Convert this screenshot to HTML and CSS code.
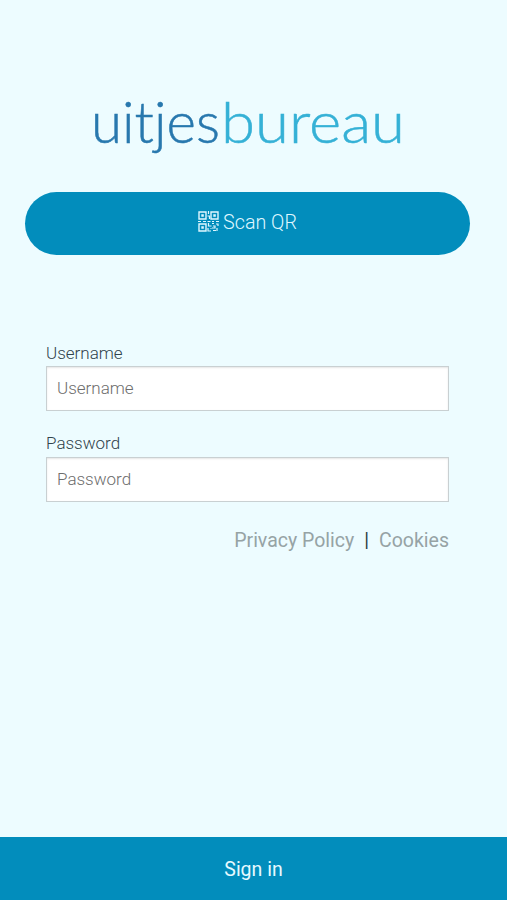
FILE: index.html
```html
<!DOCTYPE html>
<html lang="en">
<head>
<meta charset="utf-8">
<title>uitjesbureau</title>
<link rel="stylesheet" href="styles.css">
</head>
<body>
<main class="page">
  <svg class="logo" width="330" height="90" viewBox="84 76 330 90" role="img" aria-label="uitjesbureau">
    <text class="logo-text first" x="91" y="143" textLength="129" lengthAdjust="spacingAndGlyphs">uitjes</text>
    <text class="logo-text second" x="221" y="143" textLength="184" lengthAdjust="spacingAndGlyphs">bureau</text>
  </svg>
  <button class="scan" type="button">
    <svg class="qr" width="21" height="21" viewBox="0 0 21 21" fill="none" stroke="currentColor">
      <path stroke-width="1.4" d="M1 1h7v7H1zM13 1h7v7h-7zM1 13h7v7H1z"/>
      <path fill="currentColor" stroke="none" d="M3.3 3.3h2.5v2.5H3.3zM15.3 3.3h2.5v2.5h-2.5zM3.3 15.3h2.5v2.5H3.3z"/>
      <path stroke-width="1.2" d="M10.5 0v3M9.5 5h2v3M0 10.5h3M5 10.5h3M9.5 10.5h3M14 10.5h2M18 10.5h3M10.5 12v3h3M10 17v3h3M14 12.5h2M18 13h2v2M15 15h2v2h-3M19 17v3M15 19.5h3M12.5 17.5h1"/>
    </svg>
    <span>Scan QR</span>
  </button>
  <form class="form">
    <label class="label" for="user">Username</label>
    <input class="input" id="user" type="text" placeholder="Username">
    <label class="label" for="pass">Password</label>
    <input class="input" id="pass" type="password" placeholder="Password">
    <div class="links"><a>Privacy Policy</a><span class="bar">|</span><a>Cookies</a></div>
  </form>
  <button class="signin" type="button">Sign in</button>
</main>
</body>
</html>
```
FILE: styles.css
```css
* { box-sizing: border-box; }
body { margin: 0; font-family: Roboto, sans-serif; background: #edfcff; color: #30434c; }
.page { height: 900px; display: flex; flex-direction: column; overflow: hidden; }
.logo { margin: 76px 0 0 84px; flex: none; display: block; overflow: visible; }
.logo-text { font-family: Lato, sans-serif; font-weight: 300; font-size: 58px; stroke-width: .5px; }
.first { fill: #2878ae; stroke: #2878ae; }
.second { fill: #35b1d6; stroke: #35b1d6; }
.scan { margin: 26px 37px 0 25px; height: 63px; flex: none; border: 0; border-radius: 32px; background: #028dbc; color: #dff7ff; font: 300 19.7px/24px Roboto, sans-serif; display: flex; align-items: center; justify-content: center; gap: 4px; padding: 0 0 1px; }
.qr { margin-top: -4px; }
.form { margin: 88px 58px 0 46px; display: flex; flex-direction: column; }
.label { font-size: 17px; line-height: 20px; font-weight: 300; margin-bottom: 3px; }
.input { height: 45px; width: 100%; border: 1.5px solid #c9d0d2; border-radius: 0; background: #fff; padding: 0 10px 1px; font: 300 17px/20px Roboto, sans-serif; box-shadow: inset 0 1px 2px rgba(0,0,0,.1); margin-bottom: 22px; }
.input::placeholder { color: #6d6d6d; opacity: 1; }
#pass { margin-top: 1px; }
.links { display: flex; justify-content: flex-end; gap: 10px; font-size: 19.5px; line-height: 24px; margin-top: 5px; color: #96a3a5; }
.bar { color: #2d3b42; }
.signin { margin-top: auto; height: 63px; flex: none; border: 0; padding: 2px 0 0; background: #028dbc; color: #e6f9ff; font: 400 19.5px/24px Roboto, sans-serif; }
```
